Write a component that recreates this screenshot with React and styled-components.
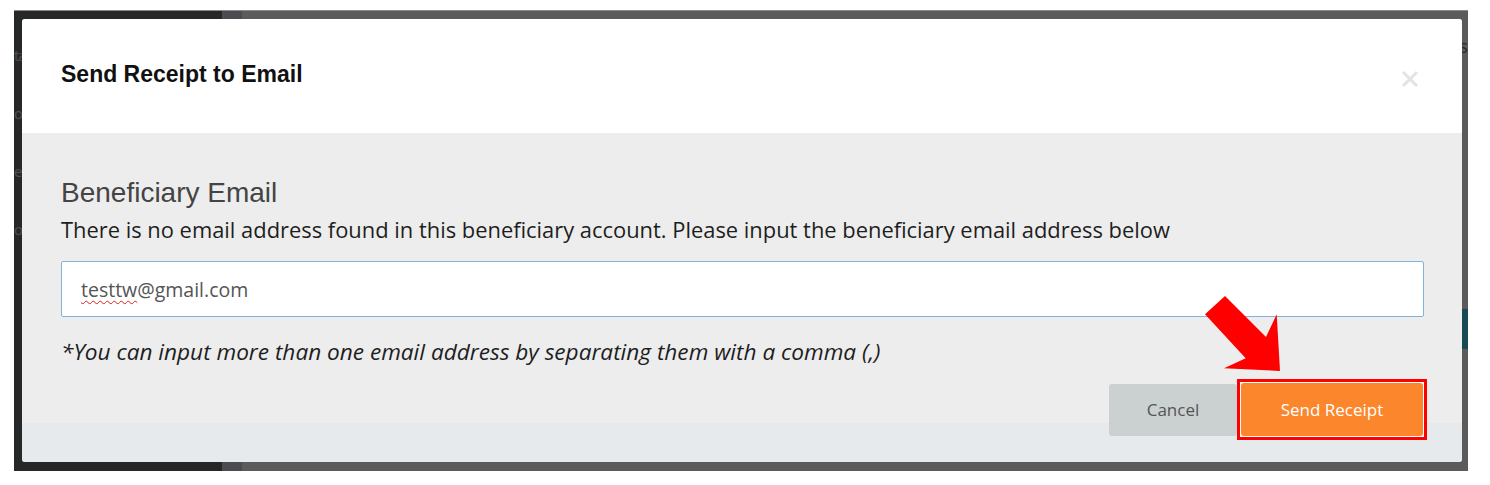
import React from "react";
import styled, { createGlobalStyle } from "styled-components";

const GlobalStyle = createGlobalStyle`
  body {
    margin: 0;
    background: #ffffff;
    font-family: "Open Sans", "Liberation Sans", sans-serif;
  }
`;

const Page = styled.div`
  padding: 10px 0 0 14px;
`;

const Frame = styled.div`
  position: relative;
  width: 1454px;
  height: 461px;
  display: flex;
  overflow: hidden;
  border-top: 1px solid #8a8a8a;
  box-sizing: border-box;
`;

const Sidebar = styled.div`
  width: 208px;
  background: #262828;
  display: flex;
  flex-direction: column;
  padding-top: 30px;
`;

const SideItem = styled.div`
  height: 58px;
  font-size: 15px;
  letter-spacing: -1px;
  color: #4e5151;
  line-height: 28px;
  white-space: nowrap;
`;

const Gutter = styled.div`
  width: 20px;
  background: #4a4c50;
`;

const Main = styled.div`
  flex: 1;
  background: #5b5b5b;
  display: flex;
  flex-direction: column;
  align-items: flex-end;
  padding-top: 22px;
`;

const PageTitle = styled.div`
  font-size: 19px;
  color: #2c2c2c;
  line-height: 26px;
  white-space: nowrap;
`;

const TealButton = styled.div`
  width: 120px;
  height: 40px;
  margin-top: 250px;
  background: #174a52;
`;

const Modal = styled.div`
  position: absolute;
  left: 8px;
  top: 8px;
  width: 1440px;
  height: 443px;
  border-radius: 3px;
  overflow: hidden;
  display: flex;
  flex-direction: column;
  background: #ededed;
`;

const Header = styled.div`
  height: 114px;
  flex-shrink: 0;
  background: #ffffff;
  box-sizing: border-box;
  padding: 0 43px 0 39px;
  display: flex;
  justify-content: space-between;
  align-items: flex-start;
`;

const Title = styled.h4`
  margin: 42px 0 0;
  font-family: "Liberation Sans", Arial, sans-serif;
  font-size: 23px;
  line-height: 26px;
  font-weight: 700;
  color: #111;
`;

const CloseButton = styled.button`
  margin-top: 51px;
  padding: 0;
  border: 0;
  background: none;
  width: 18px;
  height: 18px;
  display: flex;
`;

const Body = styled.div`
  flex: 1;
  padding: 44px 38px 0 39px;
  display: flex;
  flex-direction: column;
`;

const SectionTitle = styled.div`
  font-family: "Liberation Sans", Arial, sans-serif;
  font-size: 28px;
  line-height: 32px;
  color: #444;
`;

const Text = styled.p`
  margin: ${(p) => p.$top}px 0 0;
  font-size: ${(p) => (p.$italic ? 22.6 : 21.9)}px;
  line-height: 28px;
  color: #1e1e1e;
  font-style: ${(p) => (p.$italic ? "italic" : "normal")};
`;

const EmailField = styled.div`
  margin-top: 17px;
  height: 56px;
  box-sizing: border-box;
  border: 1px solid #80b4d9;
  border-radius: 2px;
  background: #ffffff;
  padding: 0 19px;
  display: flex;
  align-items: center;
  font-size: 19.5px;
  color: #555;
`;

const Misspelled = styled.span`
  text-decoration: underline wavy #e0201c;
  text-decoration-thickness: 1px;
  text-underline-offset: 3px;
  text-decoration-skip-ink: none;
`;

const ActionRow = styled.div`
  position: relative;
  z-index: 1;
  margin: 13px -3px -17px 0;
  display: flex;
  justify-content: flex-end;
  align-items: center;
`;

const Highlight = styled.div`
  border: 3px solid #ff0000;
  padding: 1px;
  background: #ffffff;
  display: flex;
`;

const Button = styled.button`
  width: ${(p) => p.$w}px;
  height: ${(p) => p.$h}px;
  padding: 0;
  border: 0;
  border-radius: 3px;
  font-family: "Open Sans", sans-serif;
  font-size: 17px;
  background: ${(p) => (p.$primary ? "#fb862c" : "#cbd0d0")};
  color: ${(p) => (p.$primary ? "#ffffff" : "#555")};
`;

const FooterBand = styled.div`
  height: 39px;
  flex-shrink: 0;
  background: #e6eaec;
`;

const Arrow = styled.svg`
  position: absolute;
  left: 1180px;
  top: 271px;
  z-index: 2;
`;

export default function App() {
  return (
    <>
      <GlobalStyle />
      <Page>
        <Frame>
          <Sidebar>
            <SideItem>ta</SideItem>
            <SideItem>or</SideItem>
            <SideItem>e</SideItem>
            <SideItem>or</SideItem>
          </Sidebar>
          <Gutter />
          <Main>
            <PageTitle>Receipts</PageTitle>
            <TealButton />
          </Main>

          <Modal>
            <Header>
              <Title>Send Receipt to Email</Title>
              <CloseButton aria-label="Close">
                <svg width="18" height="18" viewBox="0 0 18 18">
                  <path
                    d="M2 2 L16 16 M16 2 L2 16"
                    stroke="#e3e3e3"
                    strokeWidth="3"
                    fill="none"
                  />
                </svg>
              </CloseButton>
            </Header>
            <Body>
              <SectionTitle>Beneficiary Email</SectionTitle>
              <Text $top={7}>
                There is no email address found in this beneficiary account.
                Please input the beneficiary email address below
              </Text>
              <EmailField>
                <Misspelled>testtw</Misspelled>@gmail.com
              </EmailField>
              <Text $top={21} $italic>
                *You can input more than one email address by separating them
                with a comma (,)
              </Text>
              <ActionRow>
                <Button $w={128} $h={52}>
                  Cancel
                </Button>
                <Highlight>
                  <Button $w={182} $h={53} $primary>
                    Send Receipt
                  </Button>
                </Highlight>
              </ActionRow>
            </Body>
            <FooterBand />
            <Arrow width="85" height="90" viewBox="0 0 85 90">
              <polygon
                points="23,6 3,24.3 43.7,68.3 22,78.3 78,81 74.7,24.3 64,47"
                fill="#ff0000"
              />
            </Arrow>
          </Modal>
        </Frame>
      </Page>
    </>
  );
}
